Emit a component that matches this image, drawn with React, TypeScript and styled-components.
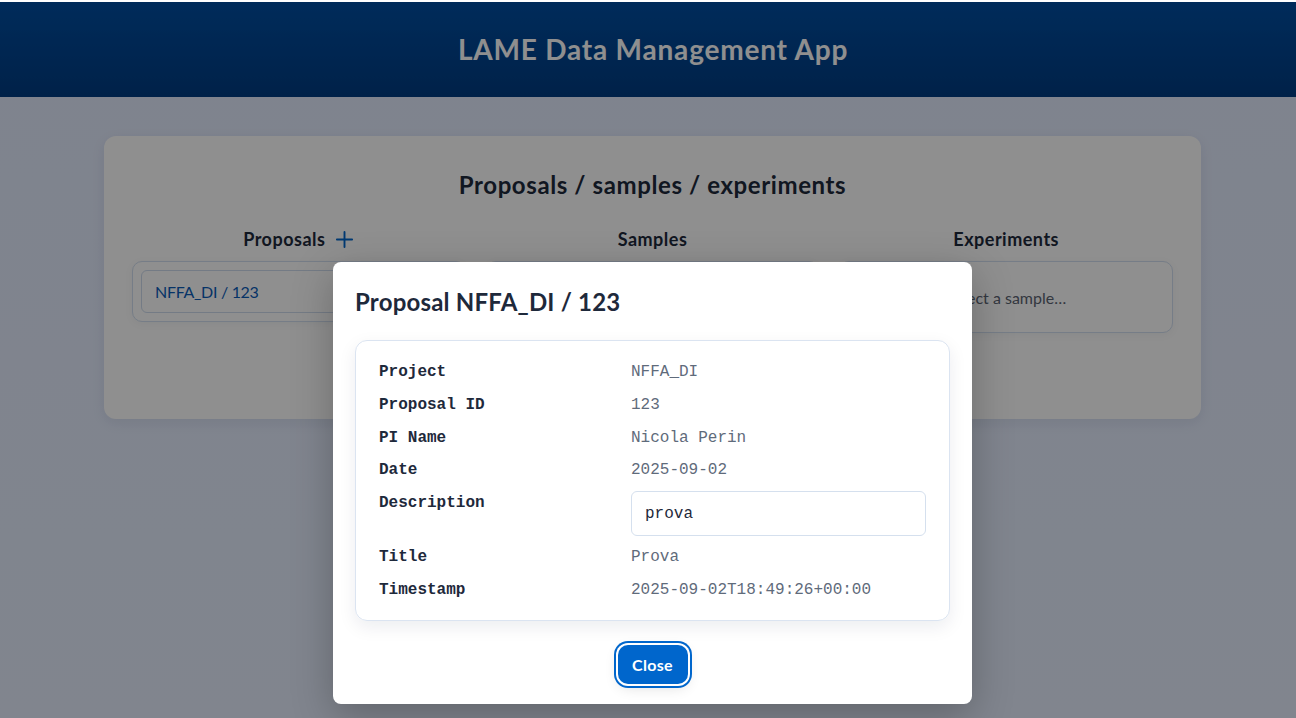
import React from "react";
import styled, { createGlobalStyle } from "styled-components";

const GlobalStyle = createGlobalStyle`
  html, body { margin: 0; padding: 0; background: #ffffff; }
  body { font-family: Lato, "Noto Sans", sans-serif; overflow: hidden; }
  * { box-sizing: border-box; }
`;

const Page = styled.div`
  position: relative;
  margin-top: 2px;
  min-height: 716px;
  background: linear-gradient(180deg, #e2eafd 0%, #e6eefe 100%);
`;

const Header = styled.header`
  height: 95px;
  display: flex;
  align-items: center;
  justify-content: center;
  padding-left: 10px;
  background: linear-gradient(180deg, #004ea2 0%, #003c82 100%);
`;

const AppTitle = styled.h1`
  margin: 0;
  color: #ffffff;
  font-size: 28px;
  line-height: 34px;
  font-weight: 700;
  letter-spacing: 0.8px;
  padding-bottom: 2px;
`;

const Main = styled.main`
  padding: 39px 95px 0 104px;
`;

const Card = styled.section`
  background: #ffffff;
  border-radius: 12px;
  box-shadow: 0 4px 14px rgba(15, 30, 60, 0.08);
  padding: 28px 28px 30px;
`;

const CardTitle = styled.h2`
  margin: 0 0 20px;
  text-align: center;
  color: #1e293b;
  font-size: 24px;
  line-height: 42px;
  font-weight: 700;
  letter-spacing: 0.6px;
`;

const Columns = styled.div`
  display: grid;
  grid-template-columns: repeat(3, 1fr);
  gap: 20px;
  align-items: start;
`;

const Column = styled.div`
  display: flex;
  flex-direction: column;
  gap: 7px;
`;

const ColumnHeading = styled.h3`
  margin: 0;
  height: 28px;
  display: flex;
  align-items: center;
  justify-content: center;
  gap: 10px;
  color: #1e293b;
  font-size: 18px;
  font-weight: 700;
  letter-spacing: 0.5px;
  padding-bottom: 2px;
`;

const PlusButton = styled.button`
  border: 0;
  padding: 0;
  background: transparent;
  display: inline-flex;
  color: #0066cc;
`;

const ListBox = styled.div`
  border: 1px solid #d3dff0;
  border-radius: 10px;
  background: #ffffff;
  padding: 8px;
  box-shadow: 0 2px 8px rgba(15, 30, 60, 0.05);
`;

const ListItem = styled.div`
  height: 43px;
  display: flex;
  align-items: center;
  padding: 0 13px;
  border: 1px solid #cfdcee;
  border-radius: 6px;
  color: #0b5cb8;
  font-size: 16px;
  letter-spacing: -0.3px;
`;

const EmptyBox = styled.div<{ $min?: number }>`
  border: 1px solid #d3dff0;
  border-radius: 10px;
  background: #ffffff;
  min-height: ${(p) => p.$min ?? 72}px;
  padding: 25px 16px 23px;
  text-align: center;
  color: #5b6472;
  font-size: 16px;
  line-height: 22px;
  box-shadow: 0 2px 8px rgba(15, 30, 60, 0.05);
`;

const Overlay = styled.div`
  position: absolute;
  inset: 0;
  background: rgba(0, 0, 0, 0.44);
  display: flex;
  justify-content: center;
  align-items: flex-start;
  padding: 260px 0 0 9px;
`;

const Modal = styled.div`
  width: 639px;
  background: #ffffff;
  border-radius: 8px;
  box-shadow: 0 12px 40px rgba(0, 0, 0, 0.25);
  padding: 22px 22px 20px;
  display: flex;
  flex-direction: column;
`;

const ModalTitle = styled.h2`
  margin: 0 0 20px;
  color: #1e293b;
  font-size: 24px;
  line-height: 36px;
  font-weight: 700;
  letter-spacing: 0.2px;
`;

const Details = styled.dl`
  margin: 0;
  border: 1px solid #dbe4f1;
  border-radius: 12px;
  box-shadow: 0 6px 18px rgba(15, 30, 60, 0.08);
  padding: 19px 23px 18px;
  display: grid;
  grid-template-columns: 232px 1fr;
  column-gap: 20px;
  row-gap: 8.8px;
  font-family: "Liberation Mono", "DejaVu Sans Mono", monospace;
  font-size: 16px;
  line-height: 24px;
`;

const Label = styled.dt`
  margin: 0;
  font-weight: 700;
  color: #1e293b;
`;

const Value = styled.dd`
  margin: 0;
  color: #5f6b7b;
`;

const DescInput = styled.input`
  display: block;
  width: 100%;
  height: 45px;
  border: 1px solid #d5e0ee;
  border-radius: 6px;
  padding: 0 13px;
  font-family: "Liberation Mono", "DejaVu Sans Mono", monospace;
  font-size: 16px;
  color: #1e293b;
  background: #ffffff;
  outline: none;
`;

const Footer = styled.div`
  display: flex;
  justify-content: center;
  padding-top: 24px;
`;

const CloseButton = styled.button`
  width: 70px;
  height: 39px;
  border: 0;
  border-radius: 10px;
  background: #0066cc;
  color: #ffffff;
  font-family: Lato, "Noto Sans", sans-serif;
  font-size: 16px;
  font-weight: 700;
  letter-spacing: 0.3px;
  box-shadow: 0 0 0 2px #ffffff, 0 0 0 4px #0066cc, 0 4px 14px rgba(0, 0, 0, 0.12);
`;

const PlusIcon = () => (
  <svg width="19" height="19" viewBox="0 0 20 20" fill="none" stroke="currentColor" strokeWidth="2" strokeLinecap="round">
    <path d="M10 2v16M2 10h16" />
  </svg>
);

const rows: [string, string][] = [
  ["Project", "NFFA_DI"],
  ["Proposal ID", "123"],
  ["PI Name", "Nicola Perin"],
  ["Date", "2025-09-02"],
];

export default function App() {
  return (
    <>
      <GlobalStyle />
      <Page>
        <Header>
          <AppTitle>LAME Data Management App</AppTitle>
        </Header>
        <Main>
          <Card>
            <CardTitle>Proposals / samples / experiments</CardTitle>
            <Columns>
              <Column>
                <ColumnHeading>
                  Proposals
                  <PlusButton aria-label="Add proposal">
                    <PlusIcon />
                  </PlusButton>
                </ColumnHeading>
                <ListBox>
                  <ListItem>NFFA_DI / 123</ListItem>
                </ListBox>
              </Column>
              <Column>
                <ColumnHeading>Samples</ColumnHeading>
                <EmptyBox $min={128} />
              </Column>
              <Column>
                <ColumnHeading>Experiments</ColumnHeading>
                <EmptyBox>Select a sample…</EmptyBox>
              </Column>
            </Columns>
          </Card>
        </Main>
        <Overlay>
          <Modal>
            <ModalTitle>Proposal NFFA_DI / 123</ModalTitle>
            <Details>
              {rows.map(([k, v]) => (
                <React.Fragment key={k}>
                  <Label>{k}</Label>
                  <Value>{v}</Value>
                </React.Fragment>
              ))}
              <Label>Description</Label>
              <Value>
                <DescInput defaultValue="prova" />
              </Value>
              <Label>Title</Label>
              <Value>Prova</Value>
              <Label>Timestamp</Label>
              <Value>2025-09-02T18:49:26+00:00</Value>
            </Details>
            <Footer>
              <CloseButton>Close</CloseButton>
            </Footer>
          </Modal>
        </Overlay>
      </Page>
    </>
  );
}
